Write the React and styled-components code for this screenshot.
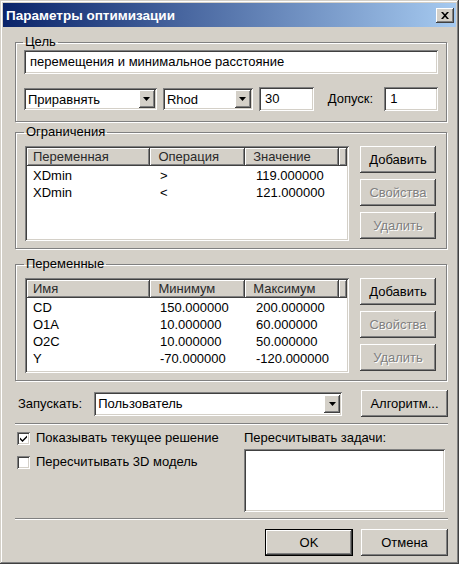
import React from "react";
import styled, { createGlobalStyle } from "styled-components";

const face = "#d4d0c8";
const raised =
  "box-shadow: inset -1px -1px #404040, inset 1px 1px #ffffff, inset -2px -2px #808080, inset 2px 2px " +
  face +
  ";";
const sunken =
  "box-shadow: inset 1px 1px #808080, inset -1px -1px #ffffff, inset 2px 2px #404040, inset -2px -2px " +
  face +
  ";";

const constraints = [
  ["XDmin", ">", "119.000000"],
  ["XDmin", "<", "121.000000"],
];

const variables = [
  ["CD", "150.000000", "200.000000"],
  ["O1A", "10.000000", "60.000000"],
  ["O2C", "10.000000", "50.000000"],
  ["Y", "-70.000000", "-120.000000"],
];

const columns = [125, 96, 95];

const Arrow = () => (
  <svg width="7" height="4" viewBox="0 0 7 4">
    <path d="M0 0h7L3.5 4z" fill="#000" />
  </svg>
);

const Combo = ({ width, value }) => (
  <ComboBox width={width}>
    <ComboText>{value}</ComboText>
    <DropButton>
      <Arrow />
    </DropButton>
  </ComboBox>
);

const ListView = ({ headers, rows }) => (
  <List>
    <HeaderRow>
      {headers.map((h, i) => (
        <HeaderCell key={h} w={columns[i]} first={i === 0}>
          {h}
        </HeaderCell>
      ))}
      <HeaderCell grow />
    </HeaderRow>
    {rows.map((r, ri) => (
      <Row key={ri}>
        {r.map((c, i) => (
          <Cell key={i} w={columns[i]} first={i === 0}>
            {c}
          </Cell>
        ))}
      </Row>
    ))}
  </List>
);

const SideButtons = () => (
  <ButtonCol>
    <Button>Добавить</Button>
    <Button disabled>Свойства</Button>
    <Button disabled>Удалить</Button>
  </ButtonCol>
);

const Check = ({ checked, children }) => (
  <CheckRow>
    <CheckBox>
      {checked && (
        <svg width="9" height="9" viewBox="0 0 9 9">
          <path d="M1 3.5l2.5 2.5L8 1.5v2L3.5 8 1 5.5z" fill="#000" />
        </svg>
      )}
    </CheckBox>
    {children}
  </CheckRow>
);

const App = () => (
  <>
    <GlobalStyle />
    <Window>
      <TitleBar>
        <Title>Параметры оптимизации</Title>
        <CloseButton>
          <svg width="8" height="7" viewBox="0 0 8 7">
            <path
              d="M0 0h2l2 2.2L6 0h2L5 3.5 8 7H6L4 4.8 2 7H0l3-3.5z"
              fill="#000"
            />
          </svg>
        </CloseButton>
      </TitleBar>

      <Content>
        <Group>
          <Legend>Цель</Legend>
          <TextField>перемещения и минимальное расстояние</TextField>
          <GoalRow>
            <Combo width={136} value="Приравнять" />
            <Combo width={92} value="Rhod" />
            <TextField width={56}>30</TextField>
            <Label gap={8}>Допуск:</Label>
            <TextField width={55} gap={5}>
              1
            </TextField>
          </GoalRow>
        </Group>

        <Group top={2} pad="6px 9px 7px 9px">
          <Legend>Ограничения</Legend>
          <GroupRow>
            <ListView
              headers={["Переменная", "Операция", "Значение"]}
              rows={constraints}
            />
            <SideButtons />
          </GroupRow>
        </Group>

        <Group top={7} pad="6px 9px 7px 9px">
          <Legend>Переменные</Legend>
          <GroupRow>
            <ListView
              headers={["Имя", "Минимум", "Максимум"]}
              rows={variables}
            />
            <SideButtons />
          </GroupRow>
        </Group>

        <RunRow>
          <Label gap={3}>Запускать:</Label>
          <RunCombo>
            <Combo width={248} value="Пользователь" />
          </RunCombo>
          <Button wide>Алгоритм...</Button>
        </RunRow>

        <Separator />

        <Lower>
          <Checks>
            <Check checked>Показывать текущее решение</Check>
            <Check>Пересчитывать 3D модель</Check>
          </Checks>
          <Tasks>
            <Label>Пересчитывать задачи:</Label>
            <TaskBox />
          </Tasks>
        </Lower>

        <Separator top={6} />

        <Footer>
          <Button isDefault w={88}>
            OK
          </Button>
          <Button w={87}>Отмена</Button>
        </Footer>
      </Content>
    </Window>
  </>
);

export default App;

const GlobalStyle = createGlobalStyle`
  body {
    margin: 0;
    background: #ffffff;
    font-family: "Liberation Sans", Arial, sans-serif;
    font-size: 13px;
    color: #000;
  }
`;

const Window = styled.div`
  width: 459px;
  height: 564px;
  box-sizing: border-box;
  padding: 3px;
  background: ${face};
  box-shadow: inset -1px -1px #404040, inset 1px 1px ${face},
    inset -2px -2px #808080, inset 2px 2px #ffffff;
  display: flex;
  flex-direction: column;
`;

const TitleBar = styled.div`
  height: 24px;
  display: flex;
  align-items: center;
  justify-content: space-between;
  padding: 0 2px 0 3px;
  background: linear-gradient(to right, #0a246a, #a6caf0);
`;

const Title = styled.span`
  color: #ffffff;
  font-weight: bold;
  font-size: 13.5px;
`;

const CloseButton = styled.div`
  width: 18px;
  height: 15px;
  display: flex;
  align-items: center;
  justify-content: center;
  background: ${face};
  ${raised}
`;

const Content = styled.div`
  padding: 0 8px 0 12px;
  display: flex;
  flex-direction: column;
`;

const Group = styled.fieldset`
  margin: ${({ top }) => top ?? 7}px 1px 0 0;
  padding: ${({ pad }) => pad || "0 8px 10px 8px"};
  border: 1px solid #808080;
  box-shadow: inset 1px 1px #ffffff, 1px 1px #ffffff;
  min-width: 0;
`;

const Legend = styled.legend`
  padding: 0 2px;
  margin-left: -1px;
  line-height: 16px;
`;

const TextField = styled.div`
  ${({ width }) => (width ? `width: ${width}px;` : "")}
  margin-left: ${({ gap }) => gap || 0}px;
  height: 24px;
  box-sizing: border-box;
  padding-left: 6px;
  line-height: 24px;
  background: #ffffff;
  ${sunken}
  white-space: nowrap;
`;

const GoalRow = styled.div`
  margin-top: 13px;
  display: flex;
  align-items: center;
  gap: 6px;
`;

const Label = styled.span`
  margin-left: ${({ gap }) => gap || 0}px;
  white-space: nowrap;
  line-height: 16px;
`;

const ComboBox = styled.div`
  width: ${({ width }) => width}px;
  height: 22px;
  box-sizing: border-box;
  padding: 2px;
  display: flex;
  align-items: center;
  background: #ffffff;
  ${sunken}
`;

const ComboText = styled.span`
  flex: 1;
  padding-left: 2px;
  white-space: nowrap;
  overflow: hidden;
`;

const DropButton = styled.div`
  width: 16px;
  height: 18px;
  display: flex;
  align-items: center;
  justify-content: center;
  background: ${face};
  ${raised}
`;

const GroupRow = styled.div`
  display: flex;
  align-items: flex-start;
`;

const List = styled.div`
  width: 324px;
  height: 95px;
  box-sizing: border-box;
  padding: 2px;
  background: #ffffff;
  ${sunken}
  overflow: hidden;
`;

const HeaderRow = styled.div`
  display: flex;
  height: 18px;
`;

const HeaderCell = styled.div`
  ${({ w, grow }) => (grow ? "flex: 1;" : `width: ${w}px;`)}
  box-sizing: border-box;
  padding-left: ${({ first }) => (first ? 6 : 8)}px;
  line-height: 18px;
  color: #2a2a2a;
  background: ${face};
  ${raised}
  white-space: nowrap;
`;

const Row = styled.div`
  display: flex;
  height: 17px;
  &:nth-child(2) {
    margin-top: 1px;
  }
`;

const Cell = styled.div`
  width: ${({ w }) => w}px;
  box-sizing: border-box;
  padding-left: ${({ first }) => (first ? 6 : 8)}px;
  line-height: 17px;
  white-space: nowrap;
`;

const ButtonCol = styled.div`
  margin-left: 11px;
  display: flex;
  flex-direction: column;
  gap: 6px;
`;

const Button = styled.button`
  width: ${({ wide, w }) => (w ? w : wide ? 87 : 76)}px;
  height: 27px;
  padding: 0;
  margin-left: ${({ wide }) => (wide ? "auto" : "0")};
  font: inherit;
  font-size: 13px;
  background: ${face};
  border: ${({ isDefault }) => (isDefault ? "1px solid #000" : "none")};
  ${raised}
  color: ${({ disabled }) => (disabled ? "#808080" : "#000")};
  text-shadow: ${({ disabled }) => (disabled ? "1px 1px #ffffff" : "none")};
`;

const RunRow = styled.div`
  margin-top: 9px;
  display: flex;
  align-items: center;
  height: 27px;
`;

const RunCombo = styled.div`
  margin-left: 12px;
  & > div {
    height: 24px;
  }
`;

const Separator = styled.div`
  margin-top: ${({ top }) => top ?? 6}px;
  height: 0;
  border-top: 1px solid #808080;
  border-bottom: 1px solid #ffffff;
`;

const Lower = styled.div`
  margin-top: 5px;
  display: flex;
`;

const Checks = styled.div`
  width: 229px;
  display: flex;
  flex-direction: column;
  gap: 8px;
`;

const CheckRow = styled.label`
  display: flex;
  align-items: center;
  gap: 6px;
  margin-left: 2px;
  line-height: 16px;
`;

const CheckBox = styled.span`
  width: 13px;
  height: 13px;
  box-sizing: border-box;
  display: flex;
  align-items: center;
  justify-content: center;
  background: #ffffff;
  ${sunken}
`;

const Tasks = styled.div`
  width: 201px;
  display: flex;
  flex-direction: column;
  gap: 3px;
`;

const TaskBox = styled.div`
  height: 63px;
  background: #ffffff;
  ${sunken}
`;

const Footer = styled.div`
  margin-top: 9px;
  display: flex;
  justify-content: flex-end;
  gap: 8px;
`;
